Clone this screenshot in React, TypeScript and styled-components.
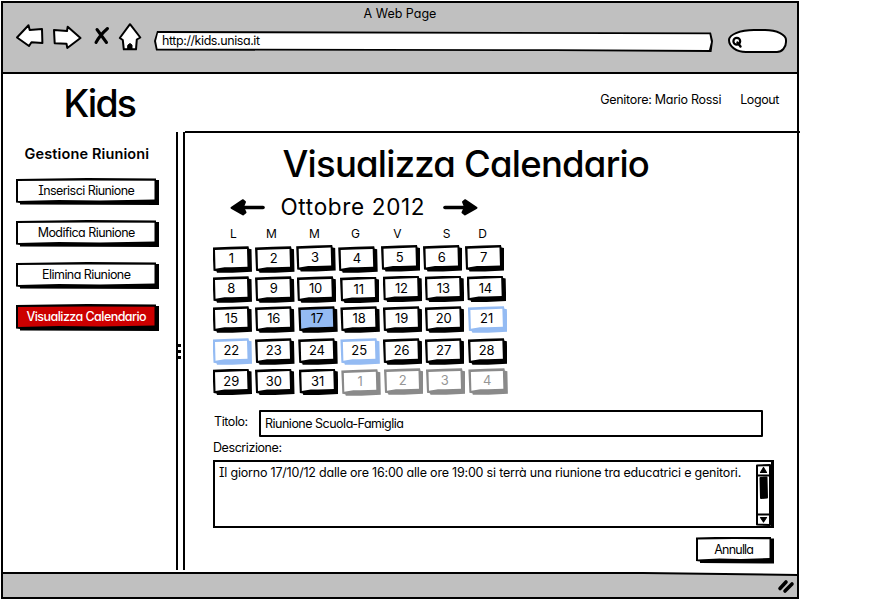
import React from 'react';
import styled, { createGlobalStyle } from 'styled-components';

const GlobalStyle = createGlobalStyle`
  * { box-sizing: border-box; }
  body {
    margin: 0;
    background: #fff;
    color: #000;
    font: 400 12.5px/16px Inter, 'Liberation Sans', sans-serif;
    font-feature-settings: 'cv11', 'cv08';
  }
`;

const Window = styled.div`
  width: 798px;
  height: 598px;
  margin: 1px 0 0 1px;
  border: 2px solid #000;
  display: flex;
  flex-direction: column;
`;

const Chrome = styled.header`
  height: 71px;
  flex: none;
  background: #c0c0c0;
  border-bottom: 2px solid #000;
`;

const WindowTitle = styled.div`
  height: 19px;
  padding-top: 3px;
  text-align: center;
`;

const Toolbar = styled.div`
  display: flex;
  align-items: flex-start;
  padding-left: 11px;
`;

const Icon = styled.svg<{ $gap?: number }>`
  flex: none;
  display: block;
  margin-left: ${(p) => p.$gap ?? 0}px;
  fill: #fff;
  stroke: #000;
  stroke-width: 2;
  stroke-linejoin: round;
  stroke-linecap: round;
`;

const AddressBar = styled.div`
  width: 559px;
  height: 21px;
  margin: 9px 0 0 10px;
  padding: 2px;
  background: #000;
  clip-path: polygon(3px 0, 557px 1.5px, 559px 10px, 557.5px 21px, 400px 20px, 2px 19.5px, 0 10px);
`;

const AddressField = styled.div`
  height: 17px;
  padding-left: 6px;
  background: #fff;
  line-height: 16px;
  letter-spacing: -0.42px;
  clip-path: polygon(2px 0, 553.5px 1.3px, 555px 9px, 553px 17px, 400px 16.2px, 1.5px 15.7px, 0 8px);
`;

const SearchBox = styled.div`
  width: 59px;
  height: 24px;
  margin: 7px 0 0 15px;
  padding: 5px 0 0 1px;
  background: #fff;
  border: 2px solid #000;
  border-radius: 26px 22px 10px 18px / 11px 11px 11px 13px;
`;

const TopBar = styled.div`
  height: 57px;
  flex: none;
  display: flex;
  align-items: center;
  padding: 0 18px 6px 60.5px;
`;

const Brand = styled.h1`
  margin: 8px auto 0 0;
  font-size: 37.5px;
  font-weight: 500;
  line-height: 44px;
  letter-spacing: -1.9px;
`;

const TopText = styled.span<{ $space: number; $gap?: number }>`
  margin-left: ${(p) => p.$gap ?? 0}px;
  letter-spacing: ${(p) => p.$space}px;
`;

const Body = styled.div`
  flex: 1;
  display: flex;
  min-height: 0;
`;

const Sidebar = styled.nav`
  width: 173px;
  padding: 15px 0 0 13px;
  display: flex;
  flex-direction: column;
  gap: 15px;
`;

const SidebarHeading = styled.h2`
  margin: 0 0 1px 8.5px;
  font-size: 14.5px;
  line-height: 16px;
  font-weight: 600;
  letter-spacing: 0.13px;
  white-space: nowrap;
`;

const SketchButton = styled.button<{ $w: number; $active?: boolean; $space?: number }>`
  width: ${(p) => p.$w}px;
  height: 27px;
  flex: none;
  border: 0;
  padding: 2px 4.5px 4.5px 2px;
  background: #000;
  color: ${(p) => (p.$active ? '#fff' : '#000')};
  font: inherit;
  font-weight: ${(p) => (p.$active ? 500 : 400)};
  font-feature-settings: inherit;
  letter-spacing: ${(p) => p.$space ?? -0.55}px;
  white-space: nowrap;
  clip-path: polygon(0 1px, 50% 0, calc(100% - 3px) 0.5px, calc(100% - 3px) 2px, 100% 2px, 100% 27px, 4px 26.5px, 4px 25px, 0 24.5px);
`;

const ButtonFace = styled.span<{ $active?: boolean }>`
  display: block;
  height: 21px;
  line-height: 22px;
  background: ${(p) => (p.$active ? '#cc0000' : '#fff')};
  clip-path: polygon(0 1px, 50% 0.5px, 100% 0.7px, 100% 19.5px, 60% 20.5px, 30% 20px, 0 21px);
`;

const Splitter = styled.div`
  width: 9px;
  height: 438px;
  margin: 1px 0 0;
  border: solid #000;
  border-width: 0 2px;
  display: flex;
  flex-direction: column;
  align-items: center;
  padding-top: 212px;
  gap: 3px;
`;

const Grip = styled.i`
  width: 3px;
  height: 3px;
  margin-right: 2px;
  background: #000;
`;

const Main = styled.main`
  flex: 1;
  min-width: 0;
  margin-right: -3px;
  border-top: 2px solid #000;
  padding-left: 27.5px;
`;

const PageTitle = styled.h2`
  margin: 8px 0 0 70px;
  font-size: 36.5px;
  font-weight: 500;
  line-height: 46px;
  letter-spacing: -0.78px;
  white-space: nowrap;
`;

const MonthRow = styled.div`
  display: flex;
  align-items: center;
  height: 38px;
  padding: 2px 0 0 17px;
`;

const MonthName = styled.span`
  width: 145px;
  margin: 0 17px 1px 16px;
  font-size: 22.5px;
  line-height: 28px;
  letter-spacing: 0.66px;
  white-space: nowrap;
`;

const WeekHeader = styled.div`
  display: flex;
  height: 16px;
  margin: 1px 0 3px;
`;

const WeekDay = styled.span<{ $gap: number }>`
  width: 12px;
  margin-left: ${(p) => p.$gap}px;
  text-align: center;
  font-size: 12px;
`;

const Week = styled.div<{ $h: number }>`
  display: flex;
  height: ${(p) => p.$h}px;
`;

type Tone = 'plain' | 'event' | 'selected' | 'outside';
const toneInk: Record<Tone, string> = {
  plain: '#000',
  event: '#94bbf3',
  selected: '#000',
  outside: '#8a8a8a',
};

const DayCell = styled.div<{ $tone: Tone; $gap: number; $drop: number }>`
  width: 39.5px;
  height: 26.5px;
  flex: none;
  margin: ${(p) => p.$drop}px 0 0 ${(p) => p.$gap}px;
  padding: 2px;
  background: ${(p) => toneInk[p.$tone]};
  clip-path: polygon(0 1.3px, 18px 0.5px, 36px 0, 36.5px 2.5px, 39px 3px, 39.5px 25.5px, 20px 26.5px, 4.5px 26.5px, 4px 25px, 1px 24.5px);
`;

const DayFace = styled.div<{ $tone: Tone }>`
  width: 33.5px;
  height: 22px;
  text-align: center;
  font-size: 13px;
  line-height: 21px;
  letter-spacing: -0.1px;
  color: ${(p) => (p.$tone === 'outside' ? '#969696' : '#000')};
  background: ${(p) => (p.$tone === 'selected' ? '#94bbf3' : '#fff')};
  clip-path: polygon(0.5px 1.8px, 14px 1.3px, 32.5px 0.6px, 33px 18.5px, 17px 19px, 10px 19px, 1px 20.5px);
`;

const TitleRow = styled.div`
  display: flex;
  align-items: center;
  margin: 14px 0 0 0.5px;
  height: 27px;
`;

const FieldLabel = styled.label`
  display: block;
  width: 46px;
  padding: 0 0 3px 1px;
  letter-spacing: -0.42px;
`;

const TextField = styled.div`
  width: 504px;
  height: 27px;
  border: 2px solid #000;
  border-radius: 1px;
  padding: 2px 0 0 4px;
  line-height: 19px;
  letter-spacing: -0.5px;
`;

const DescriptionLabel = styled(FieldLabel)`
  width: auto;
  margin: 3px 0 0 0.5px;
  padding: 0;
  height: 20px;
`;

const TextArea = styled.div`
  width: 561px;
  height: 68px;
  margin-left: 0.5px;
  border: 2px solid #000;
  border-right-width: 3px;
  display: flex;
  justify-content: space-between;
  padding: 2px 0 0 4px;
  letter-spacing: -0.2px;
  line-height: 17px;
  white-space: nowrap;
`;

const Actions = styled.div`
  display: flex;
  margin: 9px 0 0 483.5px;
`;

const StatusBar = styled.footer`
  height: 25px;
  flex: none;
  background: #000;
  padding-top: 2px;
  clip-path: polygon(0 0, 640px 0, 795px 2px, 795px 100%, 0 100%);
`;

const StatusFill = styled.div`
  height: 23px;
  display: flex;
  justify-content: flex-end;
  padding: 4px 1px 0 0;
  background: #c0c0c0;
  clip-path: polygon(0 0, 640px 0, 795px 2px, 795px 100%, 0 100%);
`;

const menu = [
  { label: 'Inserisci Riunione' },
  { label: 'Modifica Riunione' },
  { label: 'Elimina Riunione' },
  { label: 'Visualizza Calendario', active: true },
];

const weekDays: [string, number][] = [
  ['L', 15], ['M', 26], ['M', 31], ['G', 29], ['V', 30], ['S', 37], ['D', 24],
];

type Day = [label: number, gap: number, drop: number, tone?: Tone];
const weeks: { height: number; days: Day[] }[] = [
  { height: 30.5, days: [[1, 0, 1.3], [2, 3, 1.3], [3, 1.7, 0], [4, 2.5, 1.3], [5, 3.3, 0], [6, 2.5, 0], [7, 2.5, 0]] },
  { height: 30, days: [[8, 0, 0.8], [9, 3, 0.8], [10, 2.3, 0.8], [11, 3.7, 1], [12, 3.2, 0], [13, 2.5, 0], [14, 2.5, 0]] },
  { height: 32, days: [[15, 0, 0.7], [16, 3, 0.7], [17, 3.7, 0.7, 'selected'], [18, 2.7, 0.7], [19, 3, 0.7], [20, 2.5, 0.7], [21, 3.5, 0.7, 'event']] },
  { height: 30, days: [[22, 0, 0.7, 'event'], [23, 3, 0.7], [24, 3.7, 0.7], [25, 2.7, 0.7, 'event'], [26, 3, 0.7], [27, 2.5, 0.7], [28, 3.5, 0.7]] },
  { height: 28, days: [[29, 0, 1], [30, 3, 1], [31, 4.3, 1], [1, 3, 1.7, 'outside'], [2, 3.2, 0.8, 'outside'], [3, 2.5, 0.8, 'outside'], [4, 2.9, 0.8, 'outside']] },
];

function Button({ label, width, active, space }: { label: string; width: number; active?: boolean; space?: number }) {
  return (
    <SketchButton $w={width} $active={active} $space={space}>
      <ButtonFace $active={active}>{label}</ButtonFace>
    </SketchButton>
  );
}

function MonthArrow({ next }: { next?: boolean }) {
  return (
    <Icon width="35" height="20" viewBox="0 0 35 20">
      <g transform={next ? 'translate(35 0) scale(-1 1)' : undefined}>
        <path d="M13 10.5H33" fill="none" strokeWidth="3.6" />
        <path d="M1.5 10.8L13 3.2L15 5L13 10L15.5 15.5L13 17.5Z" fill="#000" strokeWidth="2" />
      </g>
    </Icon>
  );
}

function ScrollBar() {
  return (
    <Icon width="15" height="62" viewBox="0 0 15 62">
      <path d="M1 1.5L14 1V61L1 60.5Z M1 11.5H14 M1 50.5H14" />
      <path d="M7.5 3.5L10.5 8.5H4.5Z M7.5 58L10.5 53.5H4.5Z" fill="#000" strokeWidth="1.2" />
      <path d="M4.5 14L10.5 13.5L11 33.5L5 34Z" fill="#000" />
    </Icon>
  );
}

export default function App() {
  return (
    <>
      <GlobalStyle />
      <Window>
        <Chrome>
          <WindowTitle>A Web Page</WindowTitle>
          <Toolbar>
            <Icon width="32" height="30" viewBox="14 22 32 30">
              <path d="M17 37.5L28.5 25.2L29.7 30L42 29L42.4 43L31.5 42.2L29 46Z" />
            </Icon>
            <Icon width="34" height="30" viewBox="50 22 34 30" $gap={4}>
              <path d="M54 30L67 31L67.7 26.7L80.5 38L67.3 48L66.5 43.8L54.7 43.2Z" />
            </Icon>
            <Icon width="20" height="30" viewBox="92 22 20 30" $gap={8}>
              <path d="M97 29.5L106.5 42.5M107.5 28.5Q100 35 96 42.5" fill="none" strokeWidth="3" />
            </Icon>
            <Icon width="28" height="30" viewBox="116 22 28 30" $gap={4}>
              <path d="M130 24.2L140.3 37.5L136.8 39.5L136 49.3H123.8L122.8 40L119.8 38Z" />
              <path d="M128 45L130 43.5L132 45V49H128Z" fill="#000" strokeWidth="1" />
            </Icon>
            <AddressBar>
              <AddressField>http://kids.unisa.it</AddressField>
            </AddressBar>
            <SearchBox>
              <Icon width="14" height="14" viewBox="0 0 14 14">
                <circle cx="5.8" cy="5.3" r="3.4" strokeWidth="2.2" />
                <path d="M6.5 6.5L9.5 10.5" strokeWidth="2.4" />
              </Icon>
            </SearchBox>
          </Toolbar>
        </Chrome>
        <TopBar>
          <Brand>Kids</Brand>
          <TopText $space={-0.28}>Genitore: Mario Rossi</TopText>
          <TopText $space={-0.4} $gap={19}>Logout</TopText>
        </TopBar>
        <Body>
          <Sidebar>
            <SidebarHeading>Gestione Riunioni</SidebarHeading>
            {menu.map((m) => (
              <Button key={m.label} label={m.label} width={143} active={m.active} />
            ))}
          </Sidebar>
          <Splitter>
            <Grip />
            <Grip />
            <Grip />
          </Splitter>
          <Main>
            <PageTitle>Visualizza Calendario</PageTitle>
            <MonthRow>
              <MonthArrow />
              <MonthName>Ottobre 2012</MonthName>
              <MonthArrow next />
            </MonthRow>
            <WeekHeader>
              {weekDays.map(([d, gap], i) => (
                <WeekDay key={i} $gap={gap}>{d}</WeekDay>
              ))}
            </WeekHeader>
            {weeks.map((w, i) => (
              <Week key={i} $h={w.height}>
                {w.days.map(([n, gap, drop, tone = 'plain']) => (
                  <DayCell key={n} $gap={gap} $drop={drop} $tone={tone}>
                    <DayFace $tone={tone}>{n}</DayFace>
                  </DayCell>
                ))}
              </Week>
            ))}
            <TitleRow>
              <FieldLabel>Titolo:</FieldLabel>
              <TextField>Riunione Scuola-Famiglia</TextField>
            </TitleRow>
            <DescriptionLabel>Descrizione:</DescriptionLabel>
            <TextArea>
              <span>Il giorno 17/10/12 dalle ore 16:00 alle ore 19:00 si terrà una riunione tra educatrici e genitori.</span>
              <ScrollBar />
            </TextArea>
            <Actions>
              <Button label="Annulla" width={78} space={-0.8} />
            </Actions>
          </Main>
        </Body>
        <StatusBar>
          <StatusFill>
            <Icon width="19" height="17" viewBox="777 579 19 17">
              <path d="M780 589.5L786 583M785 592L792 585" fill="none" strokeWidth="3.6" />
            </Icon>
          </StatusFill>
        </StatusBar>
      </Window>
    </>
  );
}
